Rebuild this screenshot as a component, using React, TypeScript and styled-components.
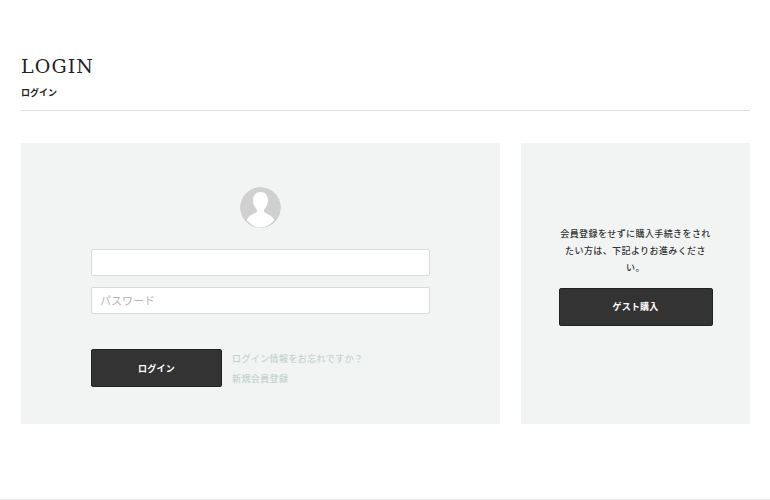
import React from 'react';
import styled, { createGlobalStyle } from 'styled-components';

const JP = '"Liberation Sans", "Noto Sans CJK JP", sans-serif';

const GlobalStyle = createGlobalStyle`
    html, body {
        margin: 0;
        padding: 0;
        background: #fff;
    }
    * { box-sizing: border-box; }
`;

const Avatar = () => (
    <AvatarIcon viewBox="0 0 41 41">
        <circle cx="20.5" cy="20.5" r="20.5" fill="#d0d0d0" />
        <path
            d="M20.5 5c-4.500 0-7.500 3.400-7.500 8 0 3.600 1.400 7 3.400 9 .8.900.9 2.600-.2 3.400-1.800 1.300-6.600 2.800-9 6.400-.4.700-.3 1.400.2 2 3 3.600 8 6.700 13.100 6.700s10.100-3.100 13.100-6.700c.5-.6.6-1.300.2-2-2.400-3.600-7.200-5.100-9-6.400-1.100-.8-1-2.500-.2-3.400 2-2 3.400-5.400 3.400-9 0-4.600-3-8-7.500-8z"
            fill="#fff"
        />
    </AvatarIcon>
);

const App = () => (
    <>
        <GlobalStyle />
        <Page>
            <Header>
                <Title>LOGIN</Title>
                <Subtitle>ログイン</Subtitle>
            </Header>
            <Columns>
                <LoginPanel>
                    <Avatar />
                    <Field type="text" aria-label="ID" />
                    <Field type="password" placeholder="パスワード" />
                    <Actions>
                        <DarkButton $width={131}>ログイン</DarkButton>
                        <Links>
                            <HelpLink href="#">ログイン情報をお忘れですか？</HelpLink>
                            <HelpLink href="#">新規会員登録</HelpLink>
                        </Links>
                    </Actions>
                </LoginPanel>
                <GuestPanel>
                    <GuestText>会員登録をせずに購入手続きをされたい方は、下記よりお進みください。</GuestText>
                    <DarkButton $width={154}>ゲスト購入</DarkButton>
                </GuestPanel>
            </Columns>
            <Footer />
        </Page>
    </>
);

export default App;

const Page = styled.div`
    width: 770px;
    height: 500px;
    padding: 54px 20px 0 21px;
    display: flex;
    flex-direction: column;
    overflow: hidden;
    font-family: ${JP};
`;

const Header = styled.header`
    height: 57px;
    border-bottom: 1px solid #dcdcdc;
`;

const Title = styled.h1`
    margin: 0;
    font-family: "DejaVu Serif", "Liberation Serif", serif;
    font-size: 19px;
    line-height: 24px;
    font-weight: 400;
    letter-spacing: 1.1px;
    color: #222;
`;

const Subtitle = styled.div`
    margin-top: 3px;
    font-size: 9px;
    line-height: 24px;
    font-weight: 700;
    color: #222;
`;

const Columns = styled.main`
    margin-top: 32px;
    display: flex;
    gap: 21px;
    height: 281px;
`;

const LoginPanel = styled.section`
    width: 479px;
    padding: 44px 70px 0;
    background: #f2f4f3;
    display: flex;
    flex-direction: column;
`;

const AvatarIcon = styled.svg`
    width: 41px;
    height: 41px;
    margin: 0 auto 21px;
    display: block;
    border-radius: 50%;
`;

const Field = styled.input`
    display: block;
    width: 339px;
    height: 27px;
    margin-bottom: 11px;
    padding: 0 8px;
    background: #fff;
    border: 1px solid #d6dad8;
    border-radius: 2px;
    outline: none;
    font-family: ${JP};
    font-size: 11px;

    &::placeholder {
        color: #b4b4b4;
        opacity: 1;
    }
`;

const Actions = styled.div`
    margin-top: 24px;
    display: flex;
    align-items: center;
    gap: 10px;
`;

const DarkButton = styled.button<{ $width: number }>`
    width: ${_ => _.$width}px;
    height: 38px;
    padding: 0;
    background: #333;
    border: 1px solid #222;
    border-radius: 2px;
    color: #fff;
    font-family: ${JP};
    font-size: 9px;
    font-weight: 700;
    letter-spacing: 0.2px;
`;

const Links = styled.div`
    padding-top: 2px;
    display: flex;
    flex-direction: column;
    gap: 6px;
`;

const HelpLink = styled.a`
    font-size: 9px;
    font-weight: 500;
    line-height: 14px;
    letter-spacing: 0.4px;
    color: #c5d3cf;
    text-decoration: none;
`;

const GuestPanel = styled.aside`
    width: 229px;
    padding: 0 38px 16px;
    background: #f2f4f3;
    display: flex;
    flex-direction: column;
    justify-content: center;
    align-items: center;
`;

const GuestText = styled.p`
    margin: 0 0 11px;
    font-size: 9px;
    font-weight: 500;
    line-height: 17px;
    letter-spacing: 0.4px;
    text-align: center;
    color: #333;
`;

const Footer = styled.footer`
    margin-top: auto;
    margin-left: -21px;
    margin-right: -20px;
    height: 1px;
    background: #e8e8e8;
`;
